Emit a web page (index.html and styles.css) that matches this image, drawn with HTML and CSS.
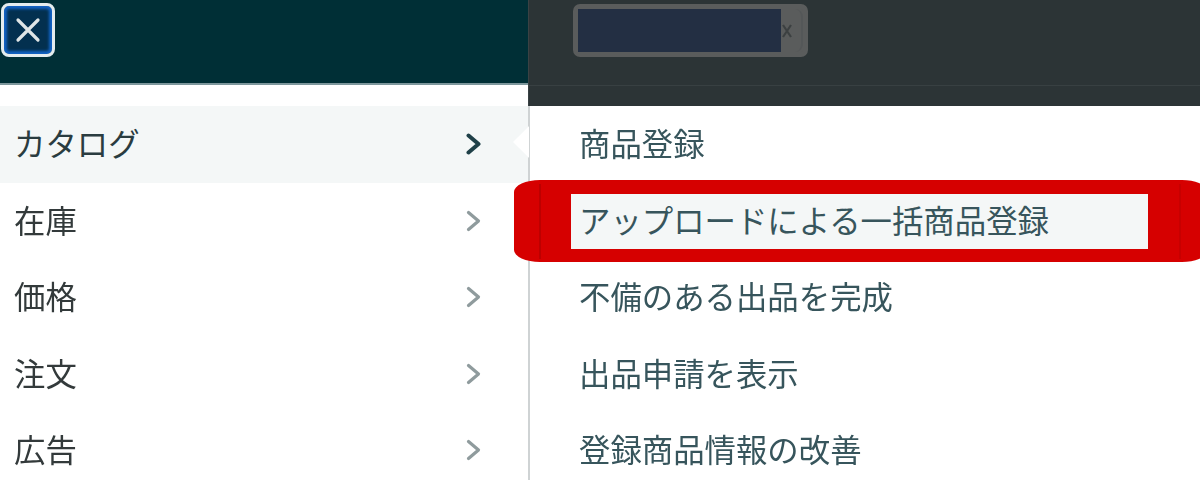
FILE: index.html
```html
<!DOCTYPE html>
<html lang="ja">
<head>
<meta charset="utf-8">
<title>カタログ</title>
<link rel="stylesheet" href="styles.css">
</head>
<body>
<div class="page">
  <section class="side">
    <header class="side-head">
      <button class="close" aria-label="閉じる">
        <svg width="26" height="26" viewBox="0 0 26 26"><path d="M3 3 L23 23 M23 3 L3 23" /></svg>
      </button>
    </header>
    <nav class="menu">
      <div class="menu-item active"><span>カタログ</span><svg class="chev" width="16" height="22" viewBox="0 0 16 22"><path d="M2.5 2.5 L12.5 11 L2.5 19.5"/></svg></div>
      <div class="menu-item"><span>在庫</span><svg class="chev" width="16" height="22" viewBox="0 0 16 22"><path d="M2.5 2.5 L12.5 11 L2.5 19.5"/></svg></div>
      <div class="menu-item"><span>価格</span><svg class="chev" width="16" height="22" viewBox="0 0 16 22"><path d="M2.5 2.5 L12.5 11 L2.5 19.5"/></svg></div>
      <div class="menu-item"><span>注文</span><svg class="chev" width="16" height="22" viewBox="0 0 16 22"><path d="M2.5 2.5 L12.5 11 L2.5 19.5"/></svg></div>
      <div class="menu-item"><span>広告</span><svg class="chev" width="16" height="22" viewBox="0 0 16 22"><path d="M2.5 2.5 L12.5 11 L2.5 19.5"/></svg></div>
    </nav>
  </section>
  <section class="panel">
    <header class="panel-head">
      <div class="select"><div class="select-fill"></div><div class="select-end"><svg width="12" height="18" viewBox="0 0 12 18"><path d="M2 3 L10 15 M10 3 L2 15"/></svg></div></div>
    </header>
    <div class="sub">
      <i class="notch"></i>
      <div class="sub-item">商品登録</div>
      <div class="sub-item hl">アップロードによる一括商品登録<i class="mark"></i></div>
      <div class="sub-item">不備のある出品を完成</div>
      <div class="sub-item">出品申請を表示</div>
      <div class="sub-item">登録商品情報の改善</div>
    </div>
  </section>
</div>
</body>
</html>
```
FILE: styles.css
```css
* { box-sizing: border-box; }
html, body { margin: 0; padding: 0; background: #fff; }
body { font-family: "Noto Sans CJK JP", "Noto Sans", sans-serif; }
.page {
  width: 1200px;
  height: 480px;
  overflow: hidden;
  display: grid;
  grid-template-columns: 528px 1fr;
  filter: blur(0.6px);
}
.side { display: flex; flex-direction: column; }
.side-head {
  height: 85px;
  background: #002f36;
  border-bottom: 2px solid #7d979c;
  padding: 3px 0 0 1px;
}
.close {
  width: 54px;
  height: 54px;
  padding: 0;
  display: flex;
  align-items: center;
  justify-content: center;
  background: #03304f;
  border: 3px solid #e4ecee;
  border-radius: 8px;
  box-shadow: inset 0 0 3px 3px #1263c4;
}
.close path { stroke: #dfe5e6; stroke-width: 3.2; stroke-linecap: round; fill: none; }
.menu { padding-top: 21px; display: flex; flex-direction: column; }
.menu-item {
  height: 76.5px;
  padding: 0 46px 3px 14px;
  display: flex;
  align-items: center;
  justify-content: space-between;
  font-size: 31.4px;
  color: #333a3b;
}
.menu-item.active { background: #f4f7f7; color: #2a3c40; }
.chev { margin-top: 3px; }
.chev path { fill: none; stroke: #8f9b9d; stroke-width: 3.2; stroke-linecap: round; stroke-linejoin: round; }
.active .chev path { stroke: #1f4048; stroke-width: 4; }
.panel { display: flex; flex-direction: column; }
.panel-head {
  height: 106px;
  background: #2c3436;
  border-left: 1px solid #3a4244;
  padding: 4px 0 0 44px;
  background-image: linear-gradient(#384042, #384042);
  background-size: 100% 1px;
  background-position: 0 85px;
  background-repeat: no-repeat;
}
.select {
  width: 235px;
  height: 53px;
  display: flex;
  border: 5px solid #5a5c5c;
  border-radius: 7px;
  background: #5a5c5c;
}
.select-fill { width: 203px; background: #232f43; }
.select-end {
  flex: 1;
  display: flex;
  align-items: center;
  border-right: 2px solid #545758;
  border-radius: 0 8px 8px 0;
}
.select-end path { stroke: #3c4041; stroke-width: 2.2; fill: none; }
.sub { position: relative; border-left: 2px solid #cfd3d4; height: 374px; }
.notch {
  position: absolute;
  left: -17px;
  top: 20px;
  width: 32px;
  height: 32px;
  background: #fff;
  transform: rotate(45deg) scale(0.72);
  clip-path: polygon(0 0, 0 100%, 100% 100%);
}
.sub-item {
  height: 76.5px;
  padding: 0 0 3px 49px;
  display: flex;
  align-items: center;
  font-size: 31.4px;
  color: #37555c;
  position: relative;
}
.sub-item.hl {
  margin: 11px 52px 10.5px 41px;
  padding-left: 8px;
  background: #f4f7f7;
  height: 55px;
}
.mark {
  position: absolute;
  left: -57px;
  top: -14px;
  bottom: -13px;
  width: 692px;
  border-style: solid;
  border-color: #d60000;
  border-width: 14px 58px 13px 57px;
  border-radius: 26px 24px 24px 26px / 12px 10px 10px 12px;
}
.mark::before, .mark::after {
  content: "";
  position: absolute;
  top: -10px;
  bottom: -10px;
  width: 2px;
  background: #bd0000;
}
.mark::before { left: -32px; }
.mark::after { left: 608px; background: #c80000; }
```
